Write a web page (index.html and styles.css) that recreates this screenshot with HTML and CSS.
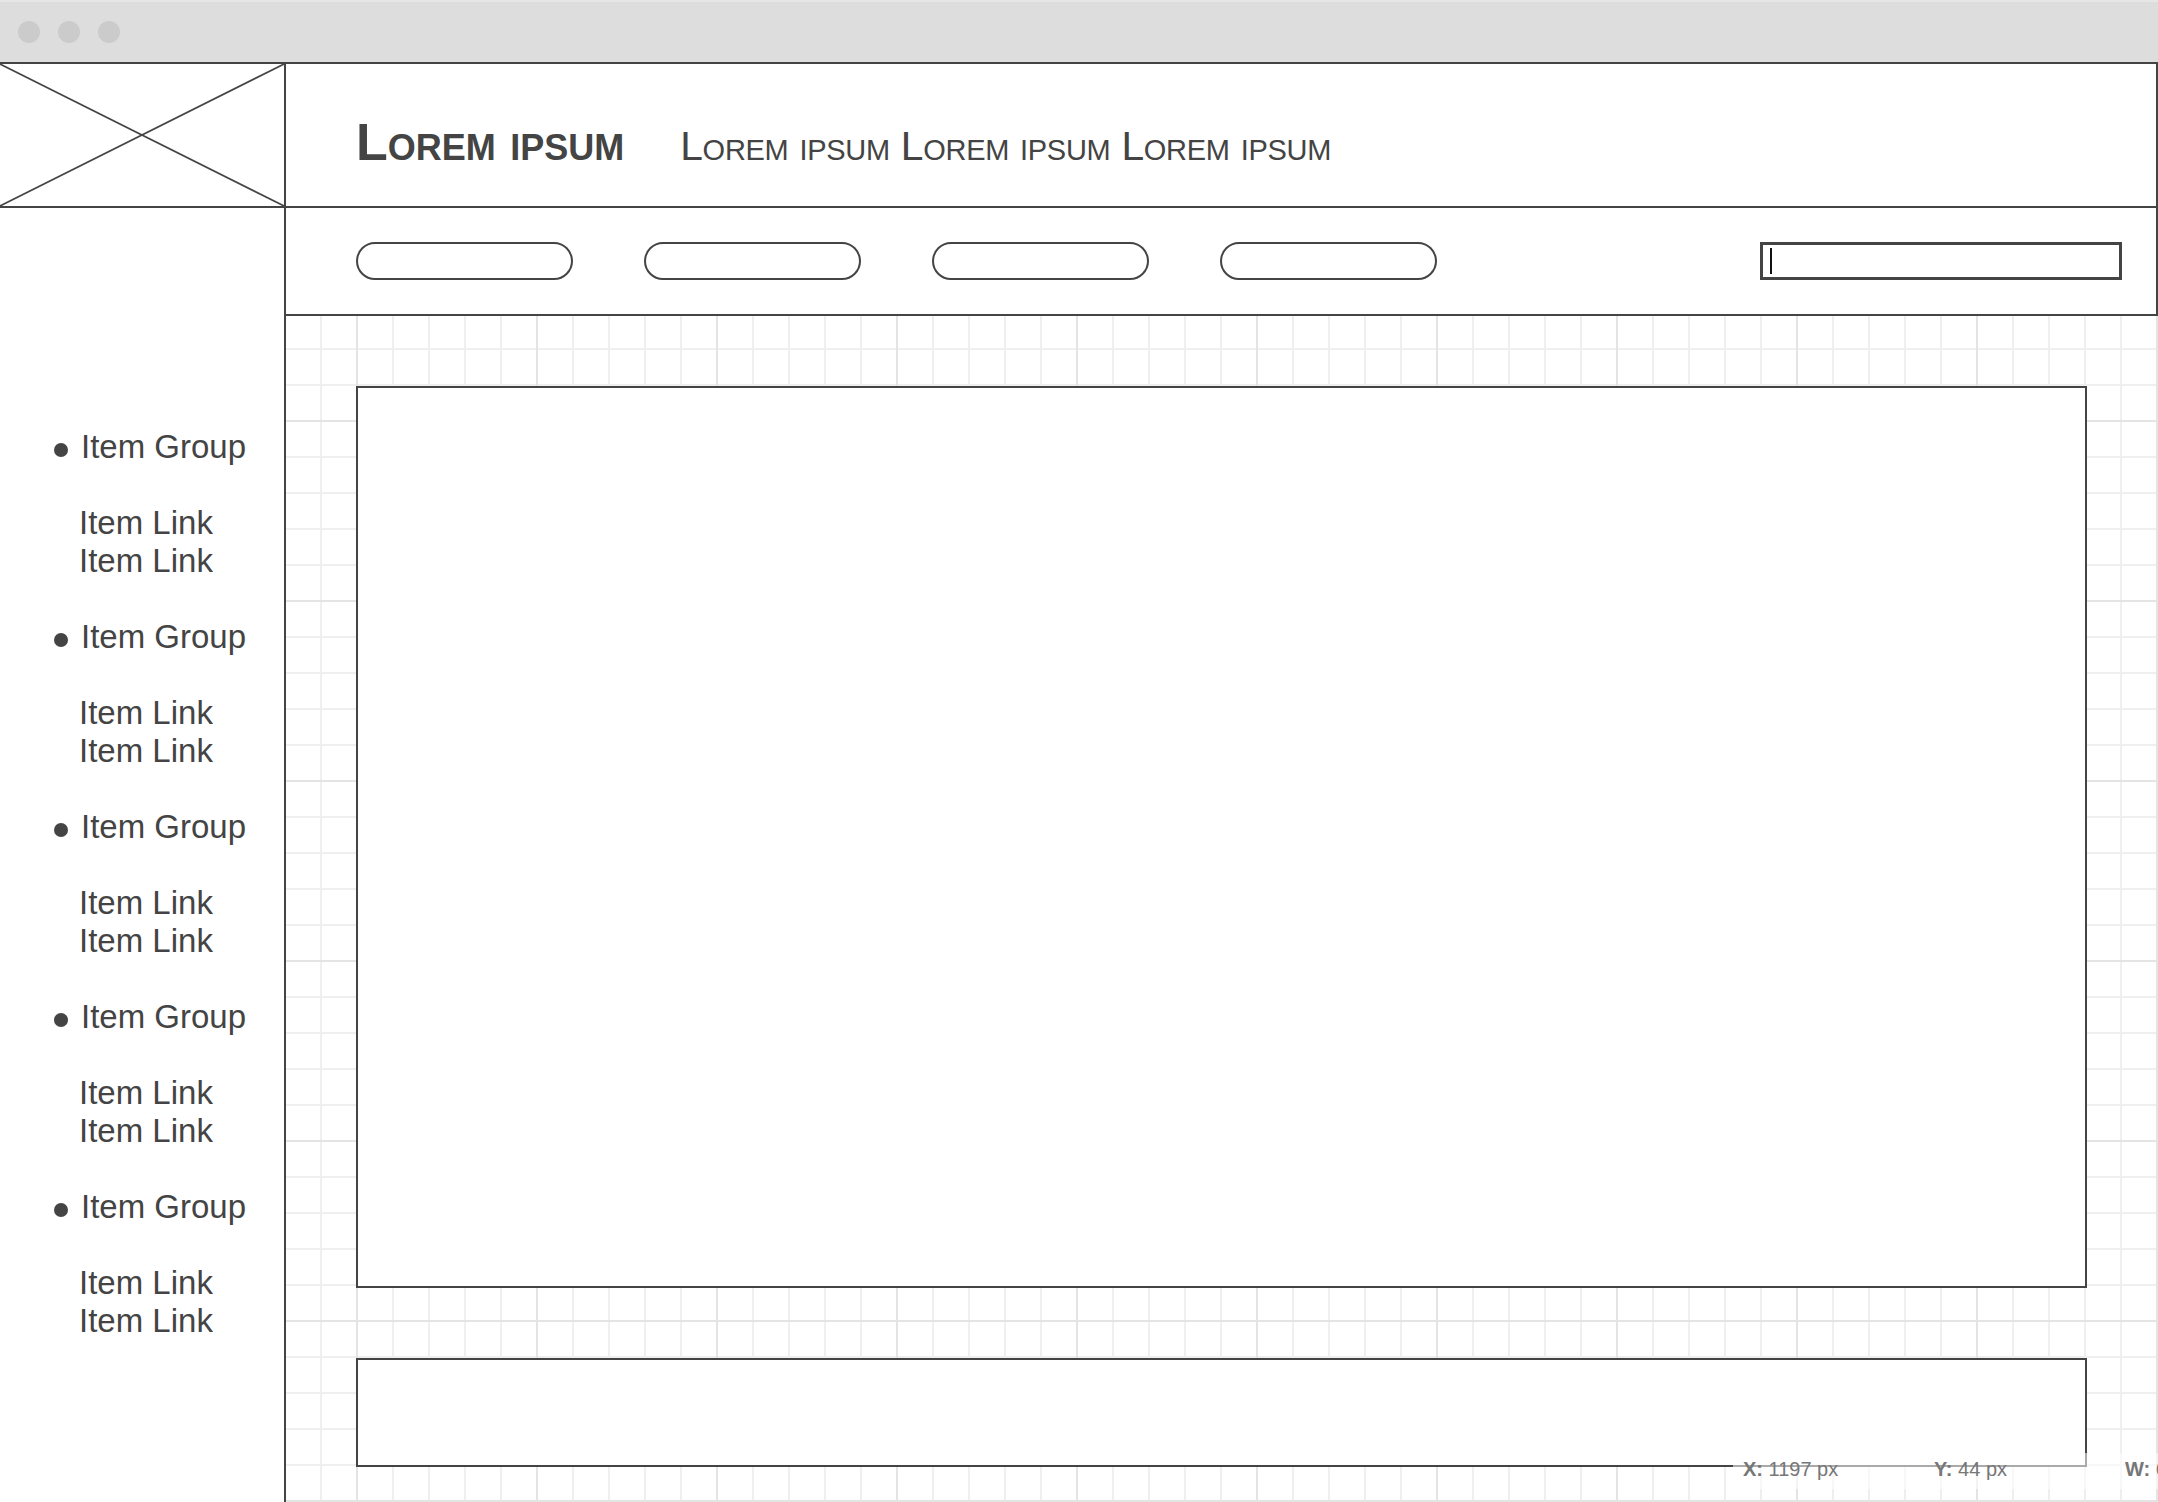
FILE: index.html
```html
<!DOCTYPE html>
<html lang="en">

<head>
   <meta charset="UTF-8">
   <meta name="viewport" content="width=device-width, initial-scale=1.0">
   <title>Wireframe</title>

   <link rel="stylesheet" href="styles.css">
</head>

<body>
   <div class="titlebar">
      <span class="dot"></span>
      <span class="dot"></span>
      <span class="dot"></span>
   </div>

   <div class="frame">
      <aside class="side">
         <div class="logo">
            <svg viewBox="0 0 100 100" preserveAspectRatio="none">
               <line x1="0" y1="0" x2="100" y2="100" />
               <line x1="0" y1="100" x2="100" y2="0" />
            </svg>
         </div>

         <ul class="menu">
            <li class="group"><span class="bullet"></span>Item Group</li>
            <li class="link first">Item Link</li>
            <li class="link">Item Link</li>

            <li class="group"><span class="bullet"></span>Item Group</li>
            <li class="link first">Item Link</li>
            <li class="link">Item Link</li>

            <li class="group"><span class="bullet"></span>Item Group</li>
            <li class="link first">Item Link</li>
            <li class="link">Item Link</li>

            <li class="group"><span class="bullet"></span>Item Group</li>
            <li class="link first">Item Link</li>
            <li class="link">Item Link</li>

            <li class="group"><span class="bullet"></span>Item Group</li>
            <li class="link first">Item Link</li>
            <li class="link">Item Link</li>
         </ul>
      </aside>

      <div class="content">
         <header class="header">
            <span class="brand">Lorem ipsum</span>
            <span class="tagline">Lorem ipsum Lorem ipsum Lorem ipsum</span>
         </header>

         <nav class="nav">
            <button class="pill"></button>
            <button class="pill"></button>
            <button class="pill"></button>
            <button class="pill"></button>
            <div class="search"><span class="caret"></span></div>
         </nav>

         <main class="main">
            <div class="panel panel-big"></div>
            <div class="panel panel-small"></div>
         </main>
      </div>
   </div>

   <!-- position readout laid over the canvas -->
   <div class="coords">
      <span class="coord"><b>X:</b> 1197 px</span>
      <span class="coord"><b>Y:</b> 44 px</span>
      <span class="coord"><b>W:</b> 671 px</span>
   </div>
</body>
</html>
```

FILE: styles.css
```css
body{
    margin: 0;
    width: 2158px;
    height: 1502px;
    overflow: hidden;
    position: relative;
    background-color: white;
    color: #444;
    font-family: "Liberation Sans", Arial, Helvetica, sans-serif;
}

.titlebar{
    height: 62px;
    box-sizing: border-box;
    background-color: #dddddd;
    border-top: 2px solid #e6e6e6;
    display: flex;
    align-items: center;
    gap: 18px;
    padding-left: 18px;
}

.dot{
    width: 22px;
    height: 22px;
    border-radius: 50%;
    background-color: #cbcbcb;
}

.frame{
    display: grid;
    grid-template-columns: 286px 1fr;
    height: 1440px;
    box-sizing: border-box;
    border-top: 2px solid #444;
}

.side{
    border-right: 2px solid #444;
    box-sizing: border-box;
}

.logo{
    height: 144px;
    box-sizing: border-box;
    border-bottom: 2px solid #444;
}

.logo svg{
    display: block;
    width: 100%;
    height: 100%;
}

.logo line{
    stroke: #444;
    stroke-width: 1.6;
    vector-effect: non-scaling-stroke;
}

.menu{
    list-style: none;
    margin: 0;
    padding: 220px 0 0 0;
    font-size: 33px;
    line-height: 38px;
}

.group{
    display: flex;
    align-items: center;
    padding-left: 54px;
    margin-top: 38px;
}

.group:first-child{
    margin-top: 0;
}

.bullet{
    width: 14px;
    height: 14px;
    border-radius: 50%;
    background-color: #444;
    margin-right: 13px;
    margin-top: 6px;
}

.link{
    padding-left: 79px;
}

.link.first{
    margin-top: 38px;
}

.content{
    display: flex;
    flex-direction: column;
    min-width: 0;
}

.header{
    height: 144px;
    box-sizing: border-box;
    border-bottom: 2px solid #444;
    border-right: 2px solid #444;
    display: flex;
    align-items: baseline;
    gap: 56px;
    padding: 48px 0 0 70px;
    font-variant: small-caps;
    white-space: nowrap;
}

.brand{
    font-size: 52px;
    font-weight: bold;
}

.tagline{
    font-size: 40.8px;
    letter-spacing: -0.3px;
}

.nav{
    height: 108px;
    box-sizing: border-box;
    border-bottom: 2px solid #444;
    border-right: 2px solid #444;
    display: flex;
    align-items: center;
    gap: 71px;
    padding: 0 34px 0 70px;
}

.pill{
    width: 217px;
    height: 38px;
    box-sizing: border-box;
    border: 2px solid #444;
    border-radius: 19px;
    background-color: white;
    padding: 0;
}

.search{
    margin-left: auto;
    width: 362px;
    height: 38px;
    box-sizing: border-box;
    border: 3px solid #444;
    display: flex;
    align-items: center;
}

.caret{
    width: 2px;
    height: 26px;
    margin-left: 7px;
    background-color: #111;
}

.main{
    flex: 1;
    display: flex;
    flex-direction: column;
    gap: 70px;
    padding: 70px 0 0 70px;
    background-color: white;
    background-image:
        repeating-linear-gradient(to right, transparent 0 70px, #e4e4e4 70px 72px, transparent 72px 180px),
        repeating-linear-gradient(to bottom, transparent 0 104px, #e4e4e4 104px 106px, transparent 106px 180px),
        repeating-linear-gradient(to right, transparent 0 34px, #efefef 34px 36px),
        repeating-linear-gradient(to bottom, transparent 0 32px, #efefef 32px 34px, transparent 34px 36px);
}

.panel{
    width: 1731px;
    box-sizing: border-box;
    border: 2px solid #444;
    background-color: white;
}

.panel-big{
    height: 902px;
}

.panel-small{
    height: 109px;
}

.coords{
    position: absolute;
    left: 1733px;
    top: 1453px;
    right: 0;
    height: 36px;
    background-color: rgba(255, 255, 255, 0.55);
    display: flex;
    align-items: flex-end;
    padding-left: 10px;
    font-family: "Liberation Sans", Arial, sans-serif;
    font-size: 20px;
    color: #777;
    white-space: nowrap;
    overflow: hidden;
}

.coord{
    width: 191px;
    flex-shrink: 0;
    line-height: 22px;
    padding-bottom: 9px;
}
```
